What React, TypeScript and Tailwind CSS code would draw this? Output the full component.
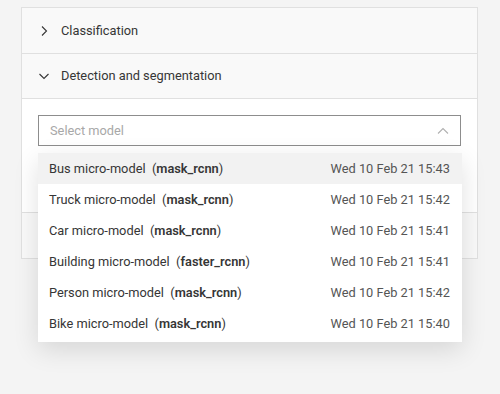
import React from 'react';

const models = [
  { name: 'Bus', arch: 'mask_rcnn', date: 'Wed 10 Feb 21 15:43' },
  { name: 'Truck', arch: 'mask_rcnn', date: 'Wed 10 Feb 21 15:42' },
  { name: 'Car', arch: 'mask_rcnn', date: 'Wed 10 Feb 21 15:41' },
  { name: 'Building', arch: 'faster_rcnn', date: 'Wed 10 Feb 21 15:41' },
  { name: 'Person', arch: 'mask_rcnn', date: 'Wed 10 Feb 21 15:42' },
  { name: 'Bike', arch: 'mask_rcnn', date: 'Wed 10 Feb 21 15:40' },
];

function Chevron({ dir }: { dir: 'right' | 'down' | 'up' }) {
  const d = dir === 'right' ? 'M4 1.5l4.5 4.5-4.5 4.5' : dir === 'down' ? 'M1.5 4l4.5 4.5 4.5-4.5' : 'M1 8.5l5-5 5 5';
  return (
    <svg width="12" height="12" viewBox="0 0 12 12" fill="none" stroke="currentColor" strokeWidth="1.1">
      <path d={d} />
    </svg>
  );
}

export default function App() {
  return (
    <div className="w-[500px] h-[394px] bg-[#f4f4f4] pt-[7px] pl-[21px] font-['Roboto',sans-serif] text-[12.8px] text-[#363636]">
      <div className="w-[457px] border border-[#e0e0e0] bg-white">
        <div className="h-[46px] flex items-center gap-[11px] px-[16px] bg-[#f9f9f9] border-b border-[#e0e0e0]">
          <Chevron dir="right" />
          <span>Classification</span>
        </div>
        <div className="h-[45px] flex items-center gap-[11px] px-[16px] bg-[#f9f9f9] border-b border-[#e0e0e0]">
          <Chevron dir="down" />
          <span>Detection and segmentation</span>
        </div>
        <div className="relative px-[16px] pt-[16px] h-[113px]">
          <div className="h-[31px] border border-[#8d8d8d] flex items-center justify-between pl-[11px] pr-[11px]">
            <span className="text-[#a8a8a8]">Select model</span>
            <span className="text-[#b0b0b0]"><Chevron dir="up" /></span>
          </div>
          <div className="absolute left-[16px] top-[54px] w-[424px] pb-[3px] bg-white shadow-[0_8px_24px_rgba(0,0,0,0.12)] z-10">
            {models.map((m, i) => (
              <div
                key={m.name}
                className={`h-[31px] flex items-center justify-between pl-[11px] pr-[12px] ${i === 0 ? 'bg-[#f2f2f2]' : ''}`}
              >
                <span>
                  {m.name} micro-model{'\u00a0\u00a0'}(<span className="font-semibold">{m.arch}</span>)
                </span>
                <span className="text-[#555]">{m.date}</span>
              </div>
            ))}
          </div>
        </div>
        <div className="h-[46px] bg-[#f9f9f9] border-t border-[#e0e0e0]" />
      </div>
    </div>
  );
}
